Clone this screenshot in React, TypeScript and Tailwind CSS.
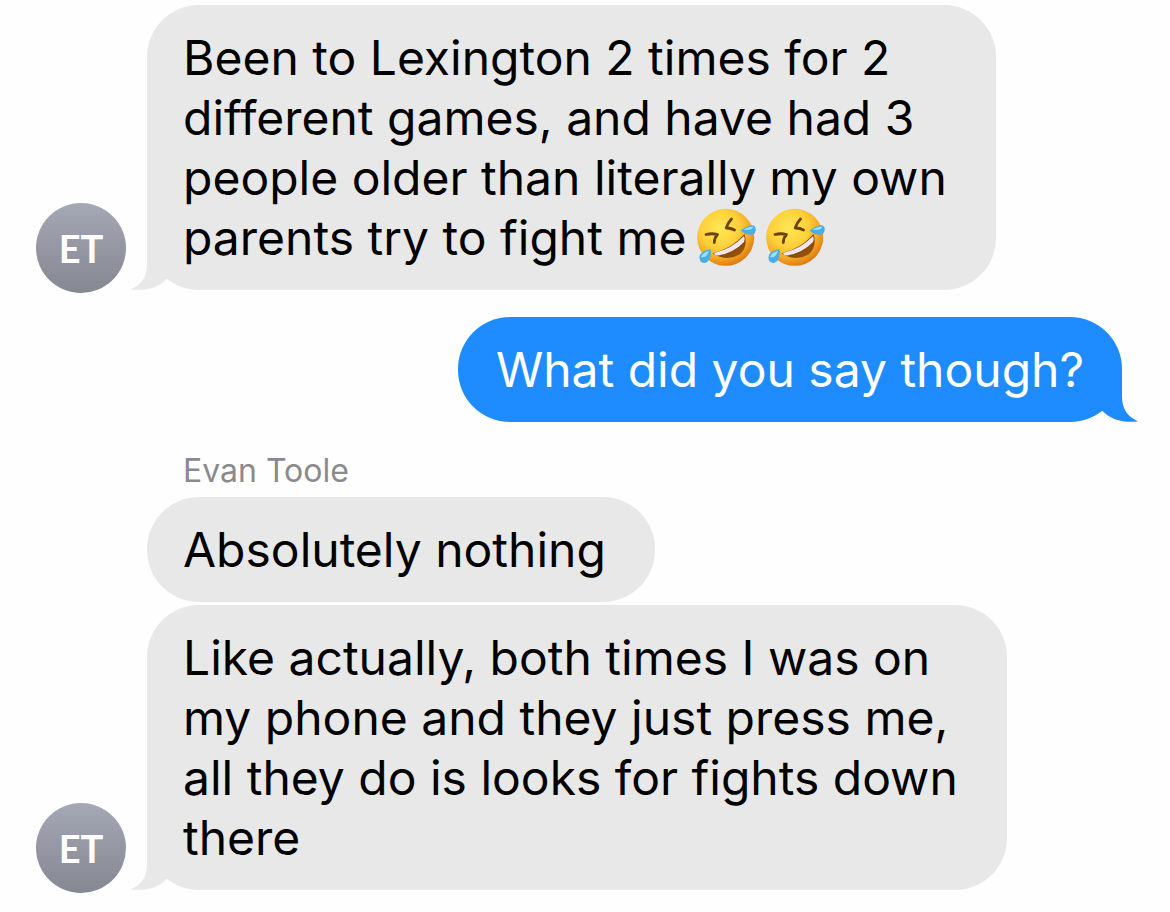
import clsx from 'clsx'

interface Message {
  id: number
  lines: string[]
  laughs?: number
  tail?: boolean
}

const firstMessages: Message[] = [
  {
    id: 1,
    lines: [
      'Been to Lexington 2 times for 2',
      'different games, and have had 3',
      'people older than literally my own',
      'parents try to fight me',
    ],
    laughs: 2,
    tail: true,
  },
]

const reply: Message = { id: 2, lines: ['What did you say though?'], tail: true }

const lastMessages: Message[] = [
  { id: 3, lines: ['Absolutely nothing'] },
  {
    id: 4,
    lines: [
      'Like actually, both times I was on',
      'my phone and they just press me,',
      'all they do is looks for fights down',
      'there',
    ],
    tail: true,
  },
]

export default function App() {
  return (
    <main className="min-h-screen bg-[#fefefe] pt-[5px] pb-5 font-['Inter',sans-serif]">
      <IncomingGroup initials="ET" messages={firstMessages} />
      <div className="mt-6 flex justify-end pr-12">
        <Bubble message={reply} outgoing />
      </div>
      <div className="mt-[29px]">
        <p className="mb-1.5 pl-[183px] text-[32px] leading-10 text-[#8a8a8d]">Evan Toole</p>
        <IncomingGroup initials="ET" messages={lastMessages} />
      </div>
    </main>
  )
}

function IncomingGroup({ initials, messages }: { initials: string; messages: Message[] }) {
  return (
    <section className="flex items-end gap-[21px] px-9">
      <Avatar initials={initials} />
      <div className="flex min-w-0 flex-col items-start gap-[3px] pb-[3px]">
        {messages.map((message) => (
          <Bubble key={message.id} message={message} />
        ))}
      </div>
    </section>
  )
}

function Avatar({ initials }: { initials: string }) {
  return (
    <div className="flex size-[90px] shrink-0 items-center justify-center rounded-full bg-linear-to-b from-[#a5a8b5] to-[#858791] font-['Lato',sans-serif] text-[38px] leading-10 font-bold text-white">
      {initials}
    </div>
  )
}

function Bubble({ message, outgoing }: { message: Message; outgoing?: boolean }) {
  return (
    <div
      className={clsx(
        'relative rounded-[52px] pt-[23px] pb-[22px] text-5xl leading-[60px]',
        outgoing ? 'bg-[#1e8cff] px-[38px] text-white' : 'bg-[#e8e8e8] pr-[49px] pl-9 text-black'
      )}
    >
      {message.tail && <Tail outgoing={outgoing} />}
      {message.lines.map((line, i) => (
        <p key={line} className="relative flex items-center">
          {line}
          {i === message.lines.length - 1 && message.laughs && (
            <span className="ml-2.5 flex gap-[9px]">
              {Array.from({ length: message.laughs }, (_, n) => (
                <RollingLaugh key={n} id={`laugh-${message.id}-${n}`} />
              ))}
            </span>
          )}
        </p>
      ))}
    </div>
  )
}

function Tail({ outgoing }: { outgoing?: boolean }) {
  return (
    <svg
      viewBox="0 0 52 52"
      aria-hidden="true"
      className={clsx(
        'absolute bottom-0 size-[52px]',
        outgoing ? '-right-4 -scale-x-100 text-[#1e8cff]' : '-left-4 text-[#e8e8e8]'
      )}
    >
      <path fill="currentColor" d="M16 0V26C16 39 11 46 0 51.500C15 53 27 50 36 40.500L50 20Z" />
    </svg>
  )
}

// Rolling on the floor laughing face
function RollingLaugh({ id }: { id: string }) {
  return (
    <svg viewBox="0 0 60 60" className="size-[60px]" role="img" aria-label="Rolling on the floor laughing">
      <defs>
        <radialGradient id={`${id}-face`} cx="0.4" cy="0.34" r="0.68">
          <stop offset="0" stopColor="#fee755" />
          <stop offset="0.5" stopColor="#fdd03a" />
          <stop offset="0.78" stopColor="#f5a824" />
          <stop offset="1" stopColor="#dc7a12" />
        </radialGradient>
        <linearGradient id={`${id}-mouth`} x1="0" y1="0" x2="1" y2="1">
          <stop offset="0" stopColor="#5e3208" />
          <stop offset="1" stopColor="#a35a0a" />
        </linearGradient>
      </defs>
      <circle cx="29.700" cy="29.300" r="28.500" fill={`url(#${id}-face)`} />
      <path
        d="M10 26.500Q16 25 21.500 26.500Q18.500 29.500 18.300 34.500"
        fill="none"
        stroke="#6b4208"
        strokeWidth="2.800"
        strokeLinecap="round"
        strokeLinejoin="round"
      />
      <path
        d="M35.500 11Q32 14.500 30.200 20Q34.500 19.800 38.500 22"
        fill="none"
        stroke="#6b4208"
        strokeWidth="2.800"
        strokeLinecap="round"
        strokeLinejoin="round"
      />
      <path d="M16.500 45.500Q36 40.500 48.500 26Q52.500 39 43.500 46.500Q31 54 16.500 45.500Z" fill={`url(#${id}-mouth)`} />
      <path d="M18 45Q36 40.800 48 28Q49.500 31 48 34Q37 45.500 21.500 47.500Q18.500 47.500 18 45Z" fill="#f0e6ee" />
      <path d="M44.500 22.500Q50 18 55.500 17Q60 17.500 59.800 21.500Q59.500 26 55 27Q49 26.500 44.500 22.500Z" fill="#49aee6" />
      <path d="M47.500 22Q52 18.500 57 18.500Q57.500 22.500 47.500 22Z" fill="#9fe0fb" />
      <path d="M14.500 41Q7.500 42 4.200 46.500Q2 52 6 54.500Q10.500 56 13.300 51.500Q15.500 47 14.500 41Z" fill="#49aee6" />
      <path d="M13 43Q6.500 44.500 5 49Q10.500 50.500 13 43Z" fill="#9fe0fb" />
    </svg>
  )
}
